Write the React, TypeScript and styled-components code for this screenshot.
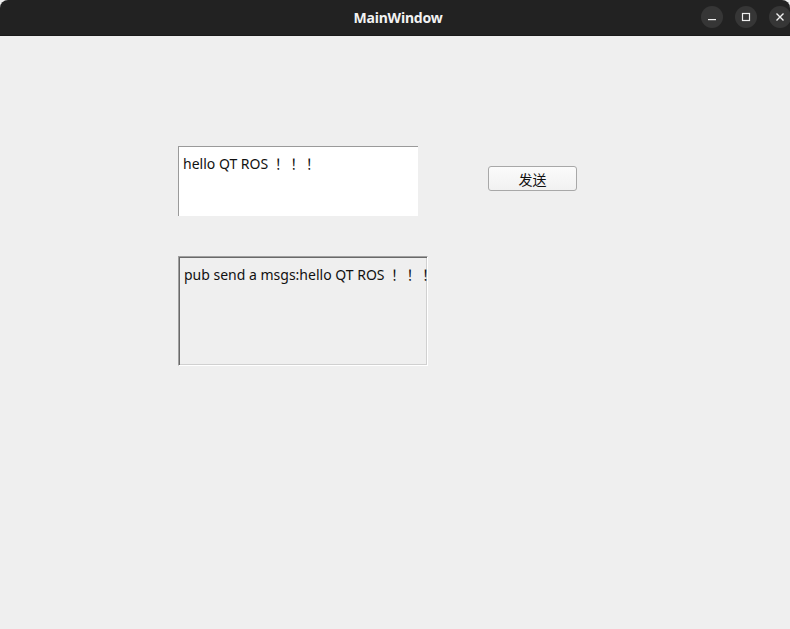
import React from "react";
import styled, { createGlobalStyle } from "styled-components";

const Global = createGlobalStyle`
  html, body { margin: 0; padding: 0; width: 790px; height: 629px; overflow: hidden; background: #efefef; }
  * { box-sizing: border-box; }
`;

const Window = styled.div`
  width: 790px;
  height: 629px;
  display: flex;
  flex-direction: column;
  background: #efefef;
  font-family: "Noto Sans", "Noto Sans CJK JP", sans-serif;
`;

const TitleBar = styled.div`
  height: 36px;
  flex: none;
  background: #222222;
  border-top-left-radius: 8px;
  border-top-right-radius: 8px;
  position: relative;
  display: flex;
  align-items: center;
  justify-content: center;
  box-shadow: inset 0 -1px 0 #1a1a1a;
`;

const Title = styled.div`
  color: #f2f2f2;
  font-family: "Noto Sans", "DejaVu Sans", sans-serif;
  font-weight: 700;
  font-size: 14px;
  letter-spacing: -0.2px;
  margin-left: 6px;
  margin-top: -1px;
`;

const Controls = styled.div`
  position: absolute;
  right: -1px;
  top: 6px;
  display: flex;
  gap: 12px;
`;

const CtlButton = styled.div`
  width: 22px;
  height: 22px;
  border-radius: 50%;
  background: #363636;
  display: flex;
  align-items: center;
  justify-content: center;
`;

const Content = styled.div`
  flex: 1;
  padding: 110px 0 0 178px;
  display: flex;
  flex-direction: column;
  gap: 40px;
`;

const Row = styled.div`
  display: flex;
  align-items: flex-start;
  gap: 70px;
`;

const LineEdit = styled.div`
  width: 240px;
  height: 70px;
  background: #ffffff;
  border-top: 1px solid #9a9a9a;
  border-left: 1px solid #9a9a9a;
  padding: 6px 0 0 4px;
  font-size: 14px;
  color: #111;
  white-space: nowrap;
  overflow: hidden;
`;

const PushButton = styled.button`
  margin-top: 20px;
  width: 89px;
  height: 25px;
  border: 1px solid #a8a8a8;
  border-radius: 3px;
  background: linear-gradient(#fbfbfb, #f1f1f1);
  font-family: "Noto Sans CJK SC", sans-serif;
  font-size: 14px;
  color: #111;
  padding: 0;
  display: flex;
  align-items: center;
  justify-content: center;
`;

const Browser = styled.div`
  width: 250px;
  height: 110px;
  background: #efefef;
  border-top: 1px solid #a0a0a0;
  border-left: 1px solid #a0a0a0;
  border-right: 1px solid #ffffff;
  border-bottom: 1px solid #ffffff;
  box-shadow: inset 1px 1px 0 #696969, inset -1px -1px 0 #d0d0d0;
  padding: 7px 0 0 5px;
  font-size: 14px;
  color: #111;
  white-space: nowrap;
  overflow: hidden;
`;

const Bang = styled.span`
  font-family: "Noto Sans CJK JP", sans-serif;
  margin-left: 3px;
  letter-spacing: 1.5px;
`;

export default function App() {
  return (
    <>
      <Global />
      <Window>
        <TitleBar>
          <Title>MainWindow</Title>
          <Controls>
            <CtlButton>
              <svg width="10" height="10" viewBox="0 0 10 10">
                <rect x="1" y="7" width="8" height="1.2" fill="#eee" />
              </svg>
            </CtlButton>
            <CtlButton>
              <svg width="10" height="10" viewBox="0 0 10 10">
                <rect x="1.5" y="1.5" width="7" height="7" fill="none" stroke="#eee" strokeWidth="1.2" />
              </svg>
            </CtlButton>
            <CtlButton>
              <svg width="10" height="10" viewBox="0 0 10 10">
                <path d="M1.5 1.5 L8.5 8.5 M8.5 1.5 L1.5 8.5" stroke="#eee" strokeWidth="1.4" />
              </svg>
            </CtlButton>
          </Controls>
        </TitleBar>
        <Content>
          <Row>
            <LineEdit>hello QT ROS<Bang>！！！</Bang></LineEdit>
            <PushButton>发送</PushButton>
          </Row>
          <Browser>pub send a msgs:hello QT ROS<Bang>！！！</Bang></Browser>
        </Content>
      </Window>
    </>
  );
}
